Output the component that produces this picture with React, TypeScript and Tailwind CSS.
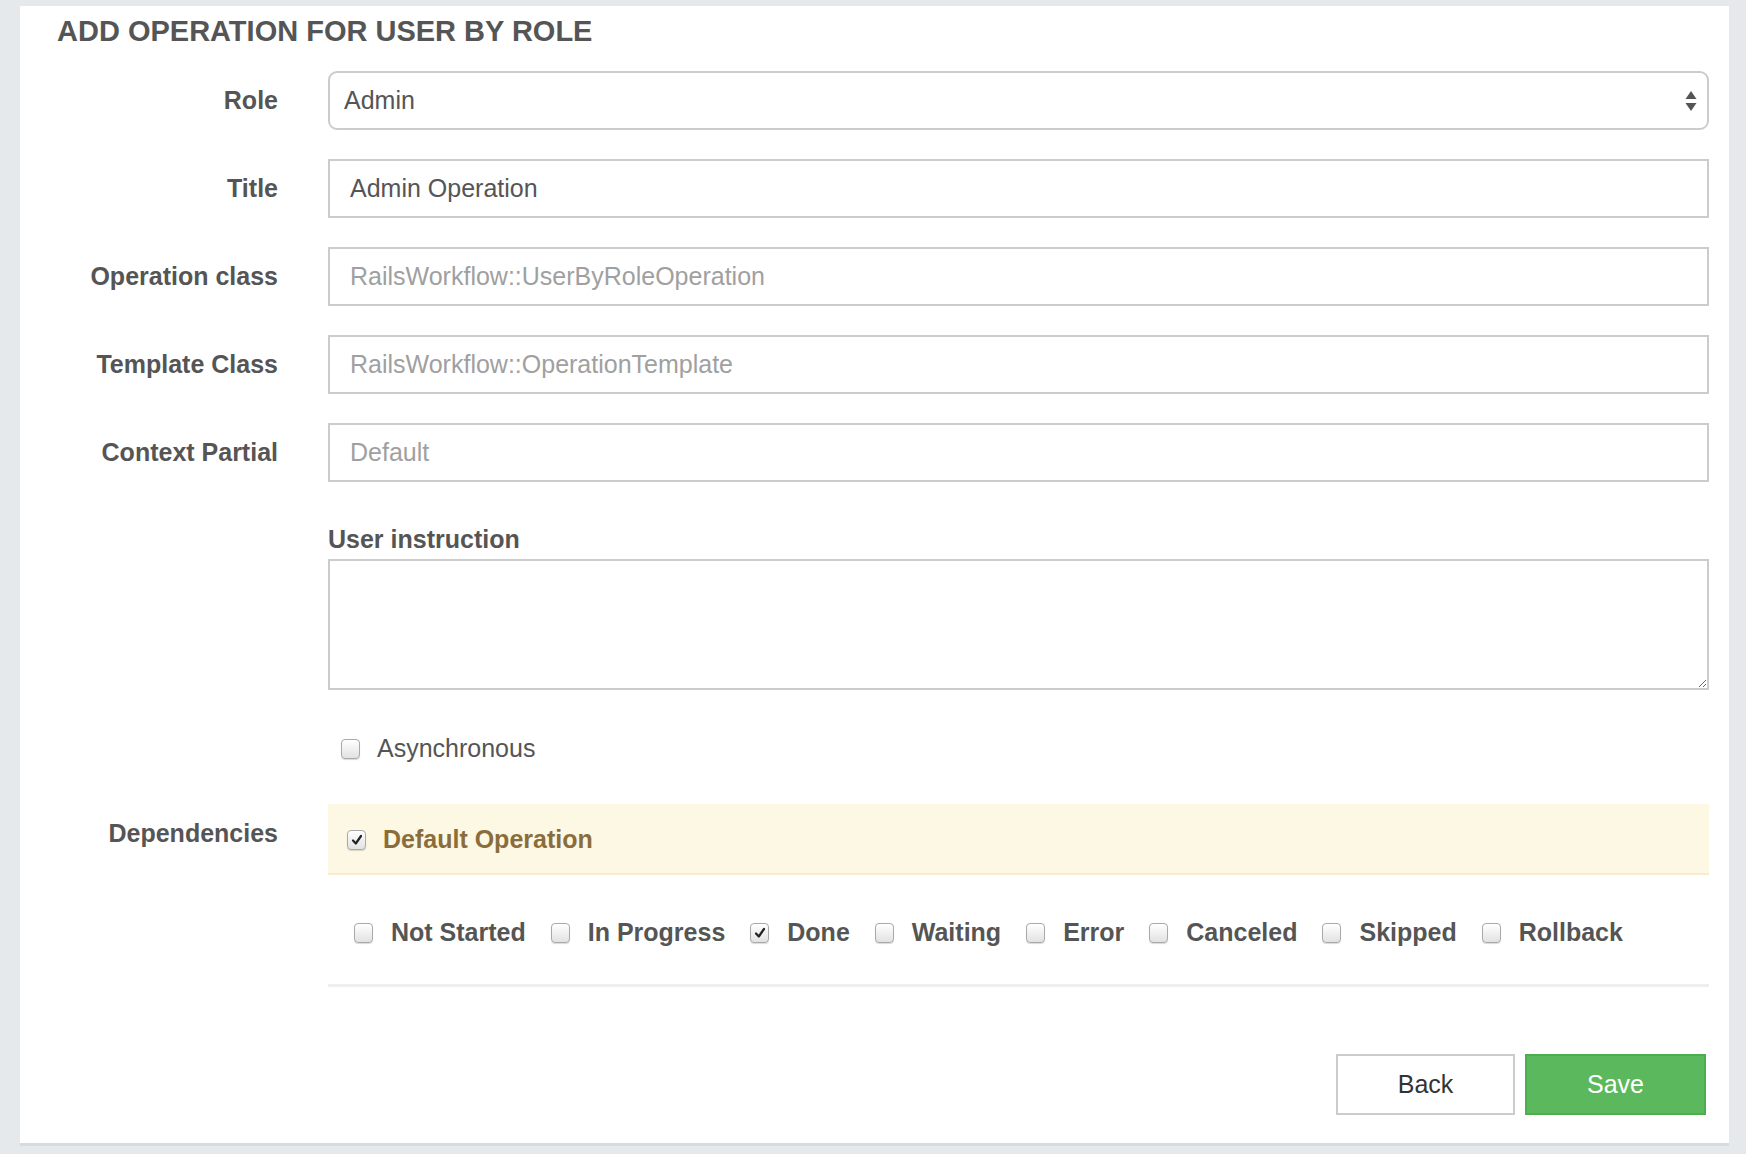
import React from 'react';

const statuses = [
  { name: 'Not Started', checked: false },
  { name: 'In Progress', checked: false },
  { name: 'Done', checked: true },
  { name: 'Waiting', checked: false },
  { name: 'Error', checked: false },
  { name: 'Canceled', checked: false },
  { name: 'Skipped', checked: false },
  { name: 'Rollback', checked: false },
];

function Check({ checked }: { checked?: boolean }) {
  return (
    <span className="flex items-center justify-center w-[19px] h-[20px] shrink-0 rounded-[4px] border border-[#a9a9a9] bg-gradient-to-b from-white to-[#e2e2e2] shadow-[0_1px_1px_rgba(0,0,0,0.15)]">
      {checked && (
        <svg width="12" height="12" viewBox="0 0 12 12">
          <path d="M2 6.5 L4.8 9.5 L10 2" fill="none" stroke="#222" strokeWidth="2.2" strokeLinecap="round" strokeLinejoin="round" />
        </svg>
      )}
    </span>
  );
}

function Row({ label, children }: { label?: string; children: React.ReactNode }) {
  return (
    <div className="flex">
      <div className="w-[221px] mr-[50px] h-[59px] flex items-center justify-end font-bold text-[25px] text-[#555]">{label}</div>
      <div className="flex-1">{children}</div>
    </div>
  );
}

export default function App() {
  const inputCls = 'w-full h-[59px] border-2 border-[#ccc] px-[20px] text-[25px] text-[#555] placeholder:text-[#a0a0a0] outline-none bg-white';

  return (
    <div className="min-h-[1154px] bg-[#e6e9ec] pt-[6px] pl-[20px] pr-[17px] font-['Liberation_Sans',Arial,sans-serif]">
      <div className="bg-white border-b-[3px] border-[#d6dbdf] pl-[37px] pr-[20px] pt-[10px] pb-[28px]">
        <h3 className="text-[29px] leading-[31px] font-bold text-[#555] mb-[24px]">ADD OPERATION FOR USER BY ROLE</h3>

        <div className="flex flex-col gap-[29px]">
          <Row label="Role">
            <div className="h-[59px] flex items-center justify-between border-2 border-[#ccc] rounded-[9px] pl-[14px] pr-[10px] text-[25px] text-[#555]">
              <span>Admin</span>
              <svg width="12" height="22" viewBox="0 0 12 22">
                <path d="M6 1 L11.5 9 L0.5 9 Z" fill="#555" />
                <path d="M6 21 L11.5 13 L0.5 13 Z" fill="#555" />
              </svg>
            </div>
          </Row>
          <Row label="Title">
            <input className={inputCls} defaultValue="Admin Operation" />
          </Row>
          <Row label="Operation class">
            <input className={inputCls} placeholder="RailsWorkflow::UserByRoleOperation" />
          </Row>
          <Row label="Template Class">
            <input className={inputCls} placeholder="RailsWorkflow::OperationTemplate" />
          </Row>
          <Row label="Context Partial">
            <input className={inputCls} placeholder="Default" />
          </Row>
        </div>

        <div className="flex mt-[43px]">
          <div className="w-[221px] mr-[50px]" />
          <div className="flex-1">
            <div className="font-bold text-[25px] leading-[28px] text-[#555] mb-[6px]">User instruction</div>
            <textarea className="block w-full h-[131px] border-2 border-[#ccc] outline-none px-[20px] py-[10px] text-[25px]" />
            <div className="flex items-center h-[30px] mt-[44px] pl-[13px]">
              <Check />
              <span className="ml-[17px] text-[25px] text-[#555]">Asynchronous</span>
            </div>
          </div>
        </div>

        <div className="flex mt-[40px]">
          <div className="w-[221px] mr-[50px] pt-[14px] text-right font-bold text-[25px] leading-[30px] text-[#555]">Dependencies</div>
          <div className="flex-1">
            <div className="h-[71px] bg-[#fcf8e3] border-b-2 border-[#faebcc] flex items-center pl-[19px] pt-[3px]">
              <Check checked />
              <span className="ml-[17px] font-bold text-[25px] text-[#8a6d3b]">Default Operation</span>
            </div>
            <div className="h-[112px] flex items-center pl-[26px] pt-[6px] gap-[25px] border-b-[3px] border-[#eee]">
              {statuses.map(s => (
                <div key={s.name} className="flex items-center">
                  <Check checked={s.checked} />
                  <span className="ml-[18px] font-bold text-[25px] text-[#555]">{s.name}</span>
                </div>
              ))}
            </div>
          </div>
        </div>

        <div className="flex justify-end gap-[10px] mt-[67px] pr-[3px]">
          <button className="w-[179px] h-[61px] border-2 border-[#ccc] bg-white text-[25px] text-[#333]">Back</button>
          <button className="w-[181px] h-[61px] border-2 border-[#4cae4c] bg-[#5cb85c] text-[25px] text-white">Save</button>
        </div>
      </div>
    </div>
  );
}
